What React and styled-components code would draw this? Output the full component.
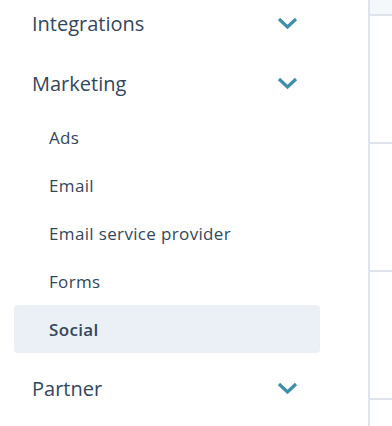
import React from 'react';
import styled, { createGlobalStyle } from 'styled-components';

const GlobalStyle = createGlobalStyle`
  html, body {
    margin: 0;
    padding: 0;
    background: #ffffff;
    overflow: hidden;
  }
  body {
    font-family: "Open Sans", Lato, sans-serif;
    color: #33475b;
  }
`;

const Page = styled.div`
  display: flex;
  height: 426px;
  overflow: hidden;
`;

const Sidebar = styled.aside`
  width: 368px;
  flex-shrink: 0;
  border-right: 2px solid #dfe3eb;
`;

const Nav = styled.nav`
  width: 306px;
  margin: -7px 0 0 14px;
`;

const Section = styled.div`
  display: flex;
  flex-direction: column;
`;

const SectionHeader = styled.div`
  height: 60px;
  display: flex;
  align-items: center;
  justify-content: space-between;
  padding: 0 22px 0 18px;
  font-size: 20px;
  color: #33475b;
`;

const SubList = styled.ul`
  list-style: none;
  margin: 0;
  padding: 0 0 5px;
`;

const SubItem = styled.li`
  height: 48px;
  display: flex;
  align-items: center;
  padding-left: 35px;
  border-radius: 4px;
  font-size: 17px;
  letter-spacing: 0.35px;
  font-weight: ${(p) => (p.active ? 600 : 400)};
  color: #33475b;
  background: ${(p) => (p.active ? '#eaf0f6' : 'transparent')};
`;

const Main = styled.main`
  flex: 1;
  display: flex;
  flex-direction: column;
`;

const MainHeader = styled.div`
  height: 14px;
  flex-shrink: 0;
  background: #f5f8fa;
  border-bottom: 2px solid #dfe3eb;
`;

const MainRow = styled.div`
  height: 126px;
  flex-shrink: 0;
  border-bottom: 2px solid #dfe3eb;
`;

const Chevron = () => (
  <svg width="21" height="12" viewBox="0 0 21 12">
    <polyline
      points="2,2 10.5,10 19,2"
      fill="none"
      stroke="#3e8fa7"
      strokeWidth="3.2"
      strokeLinecap="butt"
      strokeLinejoin="miter"
    />
  </svg>
);

const marketing = ['Ads', 'Email', 'Email service provider', 'Forms', 'Social'];

export default function App() {
  return (
    <>
      <GlobalStyle />
      <Page>
        <Sidebar>
          <Nav>
            <Section>
              <SectionHeader>
                Integrations
                <Chevron />
              </SectionHeader>
            </Section>
            <Section>
              <SectionHeader>
                Marketing
                <Chevron />
              </SectionHeader>
              <SubList>
                {marketing.map((item) => (
                  <SubItem key={item} active={item === 'Social'}>
                    {item}
                  </SubItem>
                ))}
              </SubList>
            </Section>
            <Section>
              <SectionHeader>
                Partner
                <Chevron />
              </SectionHeader>
            </Section>
          </Nav>
        </Sidebar>
        <Main>
          <MainHeader />
          <MainRow />
          <MainRow />
          <MainRow />
          <MainRow />
        </Main>
      </Page>
    </>
  );
}
